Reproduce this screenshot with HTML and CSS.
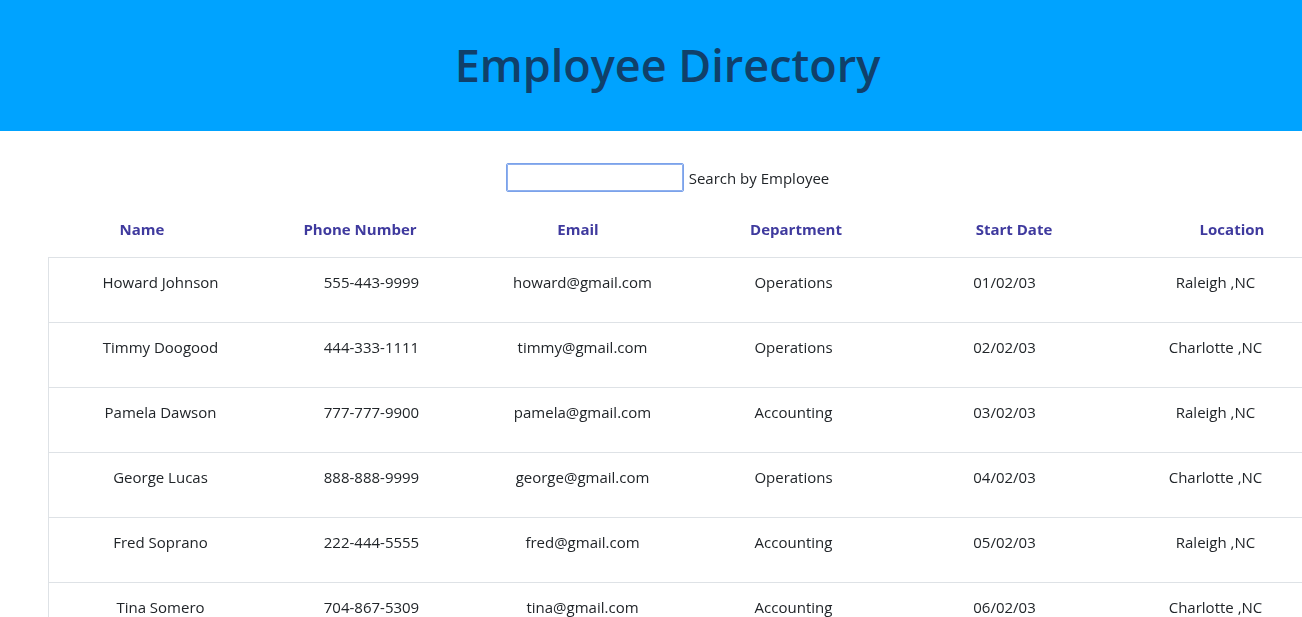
FILE: index.html
```html
<!DOCTYPE html>
<html lang="en">
<head>
<meta charset="utf-8">
<title>Employee Directory</title>
<link rel="stylesheet" href="styles.css">
</head>
<body>
<div class="page">
  <header class="banner">
    <h1 class="title">Employee Directory</h1>
  </header>
  <div class="search">
    <input class="search-input" type="text" autofocus>
    <label class="search-label">Search by Employee</label>
  </div>
  <div class="head-row">
    <div class="th">Name</div>
    <div class="th">Phone Number</div>
    <div class="th">Email</div>
    <div class="th">Department</div>
    <div class="th">Start Date</div>
    <div class="th">Location</div>
  </div>
  <div class="table">
    <div class="row">
      <div class="td">Howard Johnson</div><div class="td">555-443-9999</div><div class="td">howard@gmail.com</div><div class="td">Operations</div><div class="td">01/02/03</div><div class="td">Raleigh ,NC</div>
    </div>
    <div class="row">
      <div class="td">Timmy Doogood</div><div class="td">444-333-1111</div><div class="td">timmy@gmail.com</div><div class="td">Operations</div><div class="td">02/02/03</div><div class="td">Charlotte ,NC</div>
    </div>
    <div class="row">
      <div class="td">Pamela Dawson</div><div class="td">777-777-9900</div><div class="td">pamela@gmail.com</div><div class="td">Accounting</div><div class="td">03/02/03</div><div class="td">Raleigh ,NC</div>
    </div>
    <div class="row">
      <div class="td">George Lucas</div><div class="td">888-888-9999</div><div class="td">george@gmail.com</div><div class="td">Operations</div><div class="td">04/02/03</div><div class="td">Charlotte ,NC</div>
    </div>
    <div class="row">
      <div class="td">Fred Soprano</div><div class="td">222-444-5555</div><div class="td">fred@gmail.com</div><div class="td">Accounting</div><div class="td">05/02/03</div><div class="td">Raleigh ,NC</div>
    </div>
    <div class="row">
      <div class="td">Tina Somero</div><div class="td">704-867-5309</div><div class="td">tina@gmail.com</div><div class="td">Accounting</div><div class="td">06/02/03</div><div class="td">Charlotte ,NC</div>
    </div>
  </div>
</div>
</body>
</html>
```
FILE: styles.css
```css
html, body {
  margin: 0;
  padding: 0;
  overflow: hidden;
  background: #ffffff;
}
body {
  font-family: "Open Sans", "Noto Sans", sans-serif;
  font-size: 15px;
  color: #212529;
}
.page {
  width: 1335px;
}
.banner {
  height: 131px;
  background: #00a3ff;
  display: flex;
  align-items: center;
  justify-content: center;
}
.title {
  margin: 0;
  font-size: 45px;
  font-weight: 600;
  color: #10406a;
  letter-spacing: 0;
  line-height: 1;
  padding-bottom: 3px;
}
.search {
  display: flex;
  justify-content: center;
  align-items: center;
  gap: 5px;
  margin-top: 32px;
  height: 29px;
}
.search-input {
  box-sizing: border-box;
  width: 178px;
  height: 29px;
  margin: 0;
  border: 1px solid #7ba2ea;
  outline: 1px solid #8fb0ee;
  outline-offset: -2px;
  border-radius: 2px;
  padding: 0 3px;
  font: inherit;
}
.search-label {
  line-height: 24px;
}
.head-row {
  display: grid;
  grid-template-columns: repeat(6, 218px);
  margin-left: 33px;
  padding: 25px 0 16px;
}
.th {
  text-align: center;
  font-weight: 700;
  color: #3f3a9e;
  line-height: 24px;
}
.table {
  margin-left: 48px;
  border-left: 1px solid #dee2e6;
  padding-left: 6px;
}
.row {
  display: grid;
  grid-template-columns: repeat(6, 211px);
  border-top: 1px solid #dee2e6;
  margin-left: -7px;
  padding-left: 7px;
}
.td {
  text-align: center;
  line-height: 24px;
  padding: 12px 0 28px;
}
```
